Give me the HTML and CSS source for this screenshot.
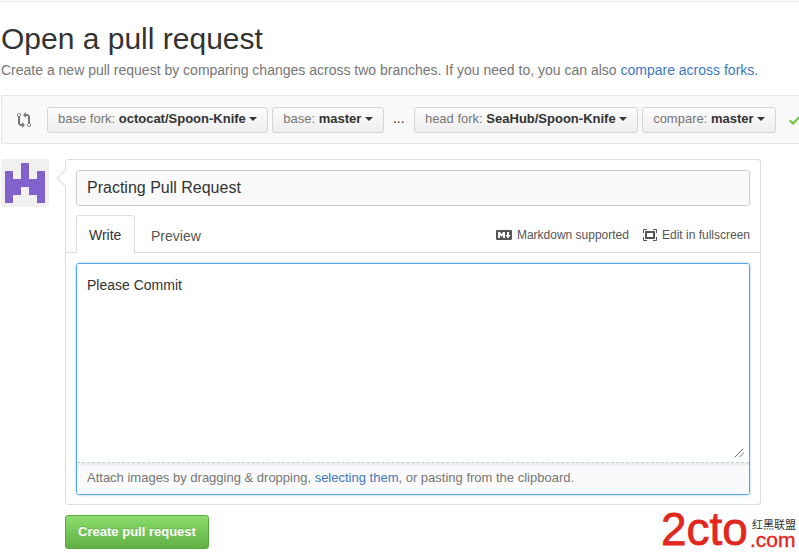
FILE: index.html
```html
<!DOCTYPE html>
<html lang="en">
<head>
<meta charset="utf-8">
<title>Open a pull request</title>
<link rel="stylesheet" href="styles.css">
</head>
<body>
<main class="page">
  <h1 class="title">Open a pull request</h1>
  <p class="lead">Create a new pull request by comparing changes across two branches. If you need to, you can also <a href="#">compare across forks</a>.</p>

  <div class="range">
    <svg class="range-icon" viewBox="0 0 14 16" width="14" height="16"><path fill="#767676" d="M5 12H4c-.27-.02-.48-.11-.69-.31-.21-.2-.3-.42-.31-.69V4.720A1.993 1.993 0 0 0 2 1a1.993 1.993 0 0 0-1 3.720V11c.03.78.34 1.470.94 2.060.6.59 1.280.91 2.060.94h1v2l3-3-3-3v2zM2 1.800c.66 0 1.200.55 1.200 1.200 0 .65-.55 1.200-1.200 1.200C1.350 4.200.800 3.650.800 3c0-.65.55-1.200 1.200-1.200zm11 9.480V5c-.03-.78-.34-1.470-.94-2.060-.6-.59-1.280-.91-2.060-.94H9V0L6 3l3 3V4h1c.27.02.48.11.69.31.21.2.3.42.31.69v6.280A1.993 1.993 0 0 0 12 15a1.993 1.993 0 0 0 1-3.720zm-1 2.920c-.66 0-1.200-.55-1.200-1.200 0-.65.55-1.200 1.200-1.200.65 0 1.200.55 1.200 1.200 0 .65-.55 1.200-1.200 1.200z"/></svg>
    <button class="pick"><span class="pick-text"><span class="lbl">base fork:</span> <b>octocat/Spoon-Knife</b></span><i class="caret"></i></button>
    <button class="pick"><span class="pick-text"><span class="lbl">base:</span> <b>master</b></span><i class="caret"></i></button>
    <span class="dots">...</span>
    <button class="pick"><span class="pick-text"><span class="lbl">head fork:</span> <b>SeaHub/Spoon-Knife</b></span><i class="caret"></i></button>
    <button class="pick"><span class="pick-text"><span class="lbl">compare:</span> <b>master</b></span><i class="caret"></i></button>
    <svg class="check" viewBox="0 0 12 16" width="12" height="16"><path fill="#6cc644" d="M12 5l-8 8-4-4 1.500-1.500L4 10l6.500-6.500z"/></svg>
  </div>

  <div class="compose">
    <div class="avatar">
      <svg viewBox="0 0 40 40" width="40" height="40"><path fill="#8162cc" d="M0 8h8v8h8V0h8v16h8V8h8v32h-8v-8h-8v-8h-8v8H8v8H0z"/></svg>
    </div>
    <div class="card">
      <i class="arrow"></i>
      <input class="title-input" type="text" value="Practing Pull Request">
      <div class="tabbar">
        <span class="tab active">Write</span>
        <span class="tab">Preview</span>
        <span class="hints">
          <span class="hint">
            <svg viewBox="0 0 16 16" width="16" height="16"><path fill="#555" d="M14.850 3H1.150C.52 3 0 3.520 0 4.150v7.690C0 12.480.52 13 1.150 13h13.690c.64 0 1.150-.52 1.150-1.150v-7.700C16 3.520 15.480 3 14.850 3zM9 11H7V8L5.500 9.920 4 8v3H2V5h2l1.500 2L7 5h2v6zm2.990.5L9.500 8H11V5h2v3h1.500l-2.510 3.500z"/></svg>
            <span>Markdown supported</span>
          </span>
          <span class="hint">
            <svg viewBox="0 0 14 16" width="14" height="16"><path fill="#555" d="M13 10h1v3c0 .547-.453 1-1 1h-3v-1h3v-3zM1 10H0v3c0 .547.453 1 1 1h3v-1H1v-3zm0-7h3V2H1c-.547 0-1 .453-1 1v3h1V3zm1 1h10v8H2V4zm2 6h6V6H4v4zm6-8v1h3v3h1V3c0-.547-.453-1-1-1h-3z"/></svg>
            <span>Edit in fullscreen</span>
          </span>
        </span>
      </div>
      <div class="editor">
        <div class="write-area">
          <span>Please Commit</span>
          <svg class="grip" viewBox="0 0 9 8" width="9" height="8"><path stroke="#666" stroke-width="1" fill="none" d="M0 8L8 0M4.500 8L9 3.500"/></svg>
        </div>
        <div class="attach">Attach images by dragging &amp; dropping, <a href="#">selecting them</a>, or pasting from the clipboard.</div>
      </div>
    </div>
  </div>

  <div class="actions">
    <button class="submit">Create pull request</button>
  </div>
</main>
<div class="mark" lang="zh-CN">
  <span class="mark-main">2cto</span>
  <span class="mark-side"><span class="mark-cn">红黑联盟</span><span class="mark-com">.com</span></span>
</div>
</body>
</html>
```
FILE: styles.css
```css
* { box-sizing: border-box; }
html, body { margin: 0; height: 555px; overflow: hidden; background: #fff; }
body { font-family: "Liberation Sans", Arial, sans-serif; font-size: 14px; color: #333; position: relative; }
a { color: #4078c0; text-decoration: none; }

.page { width: 799px; margin-top: 1px; border-top: 1px solid #eee; }
.title { margin: 0; padding: 19px 0 0 1px; font-size: 30px; font-weight: 400; line-height: 36px; color: #333; }
.lead { margin: 0; padding: 3px 0 0 1px; font-size: 14px; line-height: 20px; color: #767676; white-space: nowrap; }

.range { display: flex; align-items: center; margin: 15px 0 0 1px; height: 49px; padding: 0 0 0 15px; background: #f9f9f9; border: 1px solid #e5e5e5; border-right: 0; border-radius: 3px 0 0 3px; white-space: nowrap; overflow: hidden; }
.range-icon { margin-right: 16px; flex: none; }
.pick { display: inline-flex; align-items: center; flex: none; height: 26px; padding: 0 10px 2px; margin-right: 4px; font: 13px "Liberation Sans", Arial, sans-serif; color: #333; background: linear-gradient(#fcfcfc, #eee); border: 1px solid #d5d5d5; border-radius: 3px; white-space: pre; }
.lbl { color: #767676; }
.pick b { font-weight: 700; }
.caret { display: inline-block; margin-left: 3.500px; border: 4px solid transparent; border-top-color: #333; border-bottom: 0; }
.dots { flex: none; width: 26px; padding: 0 0 4px 5px; color: #333; font-size: 14px; }
.check { margin-left: 9px; flex: none; }

.compose { display: flex; margin: 15px 0 0 1px; align-items: flex-start; }
.avatar { width: 48px; height: 48px; padding: 4px; background: #f0f0f0; border-radius: 3px; flex: none; }
.avatar svg { display: block; }
.card { position: relative; width: 696px; height: 346px; margin-left: 16px; padding: 10px; background: #fff; border: 1px solid #ddd; border-radius: 3px; }
.arrow { position: absolute; left: -7px; top: 12px; width: 12px; height: 12px; background: #fff; border-left: 1px solid #ddd; border-bottom: 1px solid #ddd; transform: rotate(45deg); }
.title-input { position: relative; display: block; width: 674px; height: 36px; padding: 0 10px; font: 16px "Liberation Sans", Arial, sans-serif; color: #333; background: #fafafa; border: 1px solid #ccc; border-radius: 3px; outline: 0; }

.tabbar { display: flex; align-items: flex-end; height: 47px; margin: 0 -10px; padding: 0 10px; border-bottom: 1px solid #ddd; }
.tab { height: 37px; padding: 0 12px; line-height: 38px; font-size: 14px; color: #555; border: 1px solid transparent; border-bottom: 0; margin-bottom: -1px; }
.tab.active { color: #333; background: #fff; border-color: #ddd; border-radius: 3px 3px 0 0; width: 59px; margin-right: 3px; height: 38px; line-height: 39px; }
.hints { display: flex; gap: 14px; margin-left: auto; height: 36px; padding-top: 2px; align-items: center; font-size: 12px; color: #555; }
.hint { display: flex; align-items: center; gap: 5px; }
.hint svg { flex: none; }

.editor { margin-top: 10px; width: 674px; height: 232px; display: flex; flex-direction: column; border: 1px solid #51a7e8; border-radius: 3px; box-shadow: 0 0 3px rgba(81,167,232,.5); overflow: hidden; }
.write-area { position: relative; flex: 1; padding: 13px 10px; line-height: 16px; font-size: 14px; color: #333; background: #fff; }
.grip { position: absolute; right: 5px; bottom: 5px; }
.attach { height: 32px; padding: 0 10px; line-height: 30px; font-size: 13px; color: #767676; background: #fafafa; border-top: 1px dashed #ccc; box-shadow: inset 0 2px 2px #e4eff9; }

.actions { margin: 10px 0 0 65px; }
.submit { display: block; width: 144px; height: 34px; padding: 0 0 2px; font: 700 13px "Liberation Sans", Arial, sans-serif; color: #fff; text-shadow: 0 -1px 0 rgba(0,0,0,.15); background: linear-gradient(#8add6d, #60b044); border: 1px solid #5ca941; border-radius: 3px; }

.mark { position: absolute; left: 661px; top: 505px; width: 138px; height: 48px; display: flex; align-items: flex-end; color: #e1281e; }
.mark-main { flex: none; width: 89px; font: 400 46px/48px "Liberation Sans", sans-serif; -webkit-text-stroke: .8px #e1281e; white-space: nowrap; }
.mark-side { flex: none; display: flex; flex-direction: column; width: 48px; padding-bottom: 4px; }
.mark-cn { font: 11px/13px "Noto Sans CJK SC", sans-serif; color: #333; margin: 0 0 0 2px; white-space: nowrap; }
.mark-com { font: 400 21px/18px "Liberation Sans", sans-serif; letter-spacing: 0; white-space: nowrap; -webkit-text-stroke: .4px #e1281e; }
```
